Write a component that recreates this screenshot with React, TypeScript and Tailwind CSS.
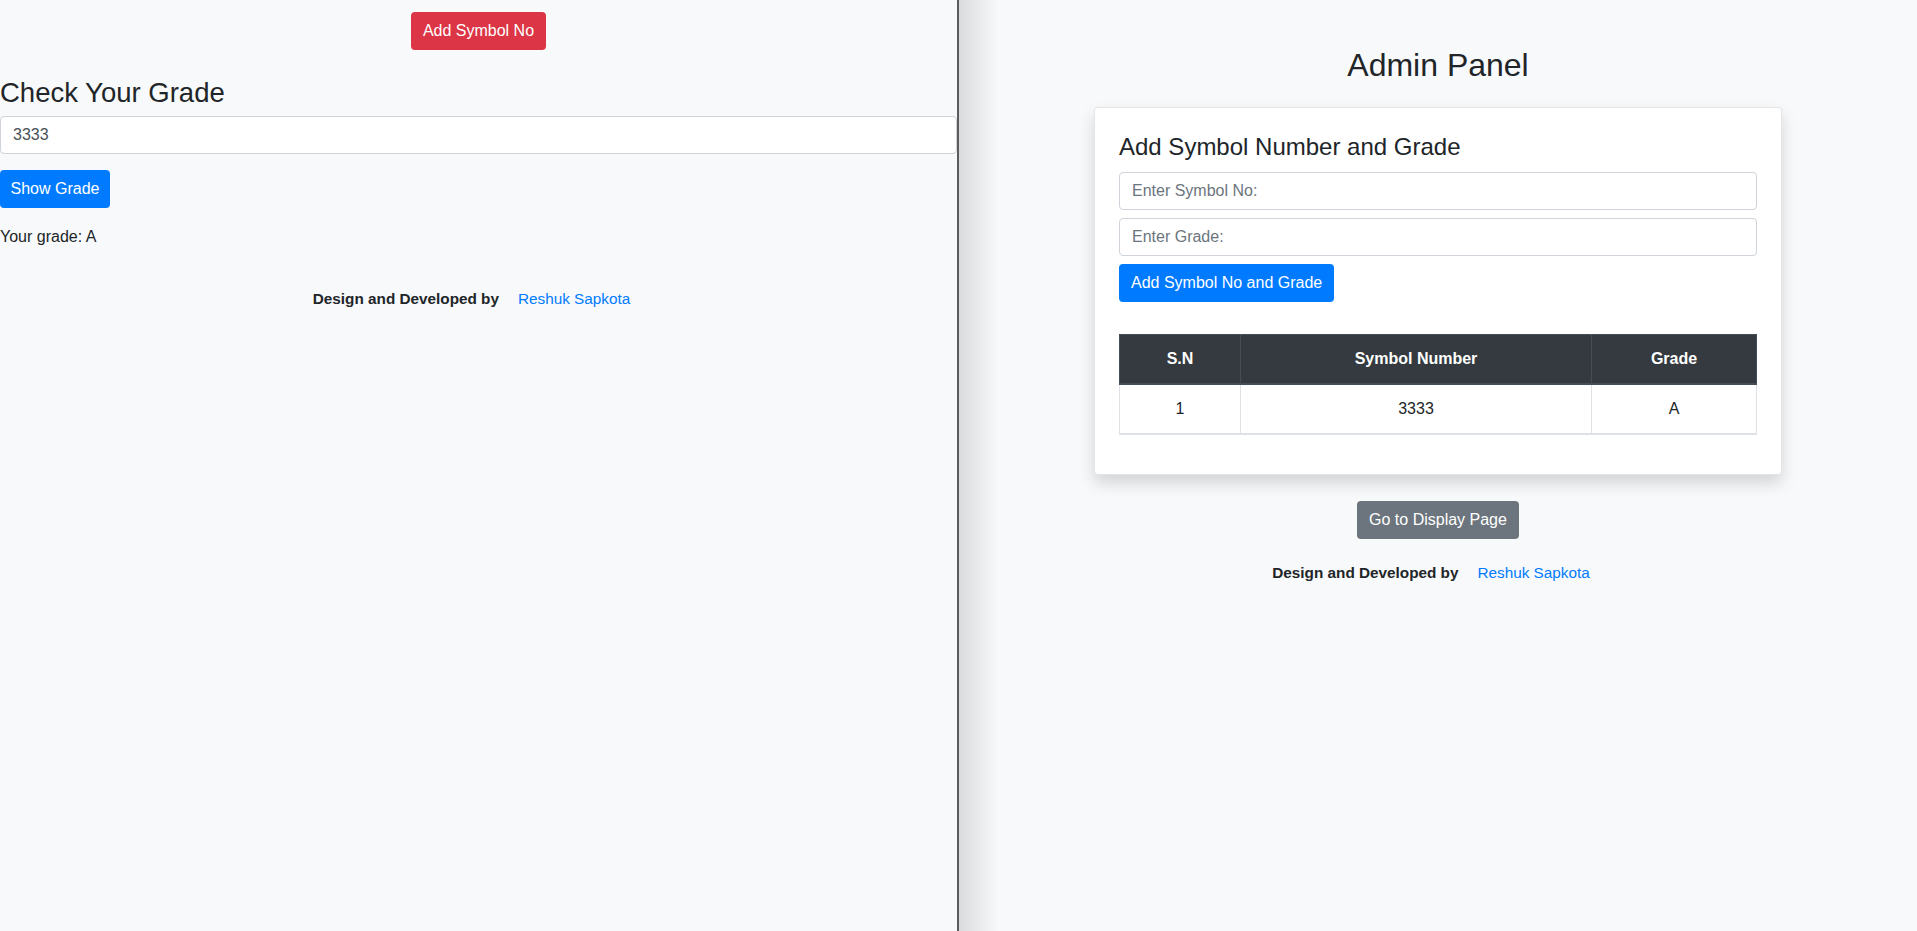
import { useState } from 'react';

const font = "font-['Liberation_Sans',Arial,sans-serif]";

const Footer = () => (
  <div className="flex justify-center pr-[14px] text-base">
    <span className="text-[15.3px] font-bold text-[#212529]">Design and Developed by</span>
    <a href="#" className="ml-[19px] text-[15.3px] text-[#007bff]">
      Reshuk Sapkota
    </a>
  </div>
);

const CheckGrade = () => {
  const [symbol, setSymbol] = useState('3333');

  return (
    <div className="flex w-[957px] shrink-0 flex-col">
      {/* 상단 버튼 */}
      <button className="mt-3 h-[38px] self-center rounded bg-[#dc3545] px-3 text-base text-white">
        Add Symbol No
      </button>

      <h3 className="mt-[26px] mb-[6px] text-[27.5px] leading-[34px] text-[#212529]">Check Your Grade</h3>
      <input
        value={symbol}
        onChange={(e) => setSymbol(e.target.value)}
        className="h-[38px] w-full rounded border border-[#ced4da] bg-white px-3 text-base text-[#495057] outline-none"
      />
      <button className="mt-4 h-[38px] w-[110px] rounded bg-[#007bff] text-base text-white">Show Grade</button>
      <p className="mt-[17px] text-base leading-6 text-[#212529]">Your grade: A</p>

      <div className="mt-[39px]">
        <Footer />
      </div>
    </div>
  );
};

const rows = [{ sn: 1, symbol: '3333', grade: 'A' }];

const AdminPanel = () => (
  <div className="relative flex flex-1 flex-col items-center">
    {/* 왼쪽 그림자 */}
    <div className="absolute inset-y-0 left-0 w-[40px] bg-linear-to-r from-black/12 to-transparent" />

    <h2 className="relative mt-[46px] text-[32px] leading-[38px] text-[#212529]">Admin Panel</h2>

    <div className="relative mt-[23px] w-[688px] rounded border border-black/10 bg-white p-6 shadow-[0_8px_16px_rgba(0,0,0,0.15)]">
      <h4 className="mb-[11px] text-2xl leading-[29px] text-[#212529]">Add Symbol Number and Grade</h4>
      <input
        placeholder="Enter Symbol No:"
        className="mb-2 h-[38px] w-full rounded border border-[#ced4da] px-3 text-base text-[#495057] outline-none placeholder:text-[#6c757d]"
      />
      <input
        placeholder="Enter Grade:"
        className="mb-2 h-[38px] w-full rounded border border-[#ced4da] px-3 text-base text-[#495057] outline-none placeholder:text-[#6c757d]"
      />
      <button className="h-[38px] rounded bg-[#007bff] px-3 text-base text-white">Add Symbol No and Grade</button>

      <table className="mt-8 mb-[15px] w-full border-collapse text-center text-base">
        <thead>
          <tr className="h-[49px] border-b-2 border-[#454d55] bg-[#343a40] font-bold text-white">
            <th className="w-[121px] border border-[#454d55]">S.N</th>
            <th className="w-[351px] border border-[#454d55]">Symbol Number</th>
            <th className="border border-[#454d55]">Grade</th>
          </tr>
        </thead>
        <tbody>
          {rows.map((r) => (
            <tr key={r.sn} className="h-[50px] border-b-2 border-[#dee2e6] text-[#212529]">
              <td className="border border-[#dee2e6]">{r.sn}</td>
              <td className="border border-[#dee2e6]">{r.symbol}</td>
              <td className="border border-[#dee2e6]">{r.grade}</td>
            </tr>
          ))}
        </tbody>
      </table>
    </div>

    <button className="relative mt-[26px] h-[38px] rounded bg-[#6c757d] px-3 text-base text-white">
      Go to Display Page
    </button>

    <div className="relative mt-[23px] w-full">
      <Footer />
    </div>
  </div>
);

export default function App() {
  return (
    <div className={`flex h-[931px] w-full bg-[#f8f9fa] ${font}`}>
      <CheckGrade />
      <div className="w-[2px] shrink-0 bg-[#5c5c5c]" />
      <AdminPanel />
    </div>
  );
}
